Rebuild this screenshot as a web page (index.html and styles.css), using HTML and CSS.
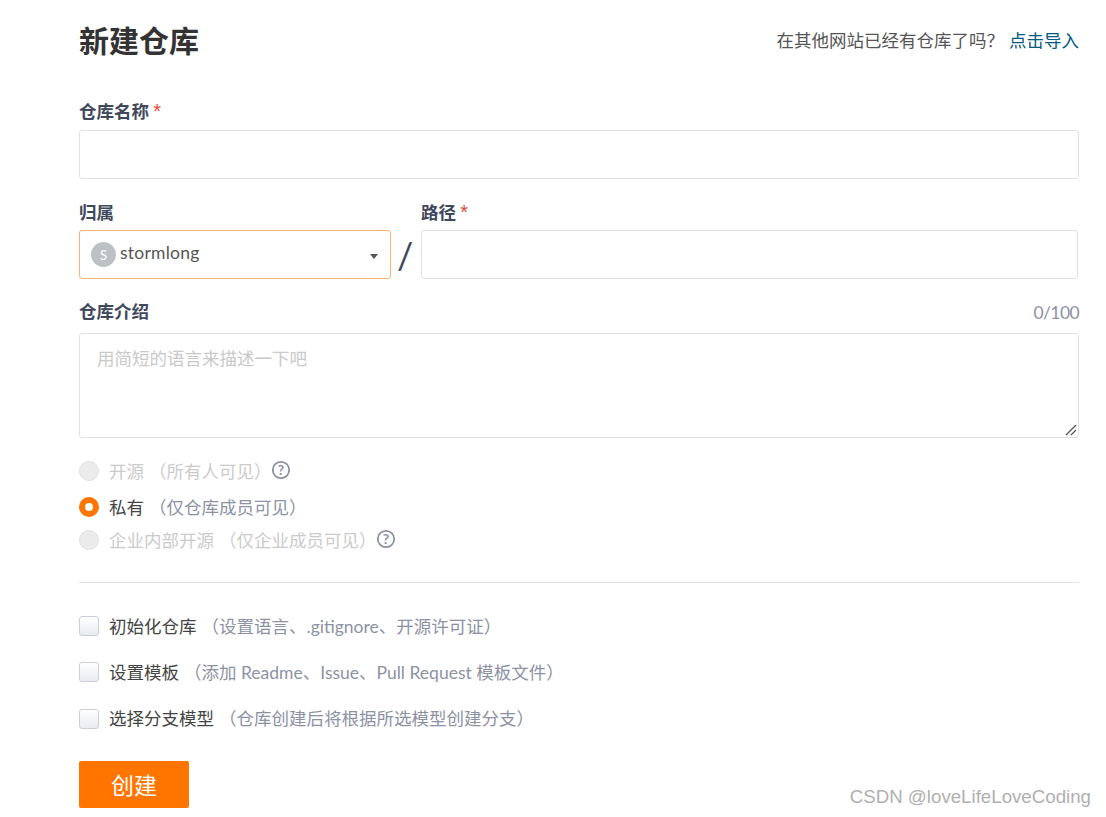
FILE: index.html
```html
<!DOCTYPE html>
<html lang="zh-CN">
<head>
<meta charset="utf-8">
<title>新建仓库</title>
<link rel="stylesheet" href="styles.css">
</head>
<body>
<main class="page">
  <header class="head">
    <h1 class="title">新建仓库</h1>
    <p class="import">在其他网站已经有仓库了吗？<a class="link">点击导入</a></p>
  </header>

  <div class="label name-label">仓库名称 <span class="req">*</span></div>
  <div class="input"></div>

  <div class="owner-row">
    <div class="owner">
      <div class="label">归属</div>
      <div class="select">
        <span class="avatar">S</span>
        <span class="user">stormlong</span>
        <span class="caret"></span>
      </div>
    </div>
    <div class="slash">/</div>
    <div class="path">
      <div class="label">路径 <span class="req">*</span></div>
      <div class="input"></div>
    </div>
  </div>

  <div class="desc-head">
    <div class="label">仓库介绍</div>
    <div class="count">0/100</div>
  </div>
  <div class="textarea">
    <span class="placeholder">用简短的语言来描述一下吧</span>
    <svg class="grip" width="12" height="12" viewBox="0 0 12 12"><path d="M1 11L11 1M6 11L11 6" stroke="#555" stroke-width="1.3" fill="none"/></svg>
  </div>

  <div class="radios">
    <div class="radio-row off r1">
      <span class="radio"></span><span class="r-text">开源</span><span class="r-note">（所有人可见）</span>
      <svg class="help" width="20" height="20" viewBox="0 0 20 20"><circle cx="10" cy="10" r="8.2" fill="none" stroke="#8c92a4" stroke-width="1.8"/><text x="10" y="14.8" text-anchor="middle" class="help-q">?</text></svg>
    </div>
    <div class="radio-row r2">
      <span class="radio on"></span><span class="r-text">私有</span><span class="r-note">（仅仓库成员可见）</span>
    </div>
    <div class="radio-row off r3">
      <span class="radio"></span><span class="r-text">企业内部开源</span><span class="r-note">（仅企业成员可见）</span>
      <svg class="help" width="20" height="20" viewBox="0 0 20 20"><circle cx="10" cy="10" r="8.2" fill="none" stroke="#8c92a4" stroke-width="1.8"/><text x="10" y="14.8" text-anchor="middle" class="help-q">?</text></svg>
    </div>
  </div>

  <hr class="rule">

  <div class="checks">
    <div class="check-row"><span class="check"></span><span class="c-text">初始化仓库</span><span class="c-note">（设置语言、.gitignore、开源许可证）</span></div>
    <div class="check-row"><span class="check"></span><span class="c-text">设置模板</span><span class="c-note">（添加 Readme、Issue、Pull Request 模板文件）</span></div>
    <div class="check-row"><span class="check"></span><span class="c-text">选择分支模型</span><span class="c-note">（仓库创建后将根据所选模型创建分支）</span></div>
  </div>

  <button class="submit">创建</button>
</main>
<div class="mark">CSDN @loveLifeLoveCoding</div>
</body>
</html>
```
FILE: styles.css
```css
* { box-sizing: border-box; }
html, body { margin: 0; height: 100%; overflow: hidden; background: #fff; }
body {
  font-family: Lato, "Noto Sans CJK SC", sans-serif;
  font-size: 17.5px;
  color: #40485b;
  position: relative;
}
.page { width: 1079px; padding: 17px 0 0 79px; }
.head { display: flex; justify-content: space-between; align-items: center; height: 46px; }
.title { margin: 0; font-size: 30px; font-weight: 700; color: #333; line-height: 46px; }
.import { margin: 0; color: #555; line-height: 24px; padding-top: 2px; }
.link { color: #005980; margin-left: 5px; }
.label { font-weight: 700; line-height: 24px; height: 24px; color: #40485b; }
.req { color: #e5493a; font-family: "Liberation Sans", sans-serif; font-size: 20px; font-weight: 400; line-height: 1; }
.name-label { margin-top: 37px; margin-bottom: 6px; }
.input { height: 49px; border: 1px solid #dfe1e6; border-radius: 3px; background: #fff; }
.owner-row { display: flex; margin-top: 22px; }
.owner { width: 312px; flex: none; }
.owner .label, .path .label { margin-bottom: 5px; }
.select {
  height: 49px; border: 1px solid #fdb36f; border-radius: 3px;
  display: flex; align-items: center; padding: 0 11px; position: relative;
}
.avatar {
  width: 25px; height: 25px; border-radius: 50%; background: #bdc1c6; color: #fff;
  font-size: 13px; display: flex; align-items: center; justify-content: center; flex: none;
}
.user { margin-left: 4px; color: #555; position: relative; top: -2px; letter-spacing: 0.25px; }
.caret {
  margin-left: auto; width: 0; height: 0; border-style: solid;
  border-width: 5px 4.5px 0; border-color: #555 transparent transparent;
  position: relative; top: 2px; right: 1px;
}
.slash {
  width: 30px; flex: none; height: 78px; padding-top: 30px; padding-left: 6px;
  font-size: 36px; line-height: 48px; color: #40485b; font-weight: 400;
}
.path { width: 657px; flex: none; }
.desc-head { display: flex; justify-content: space-between; align-items: center; margin-top: 21px; height: 24px; }
.count { color: #8c92a4; letter-spacing: -0.6px; }
.textarea {
  margin-top: 9px; height: 105px; border: 1px solid #dfe1e6; border-radius: 3px;
  padding: 11px 17px; position: relative; line-height: 28px;
}
.placeholder { color: #c9c9c9; }
.grip { position: absolute; right: 1px; bottom: 1px; }
.radios { margin-top: 19px; }
.radio-row { display: flex; align-items: center; height: 28px; }
.r2 { margin-top: 8px; }
.r3 { margin-top: 5px; }
.radio {
  width: 20px; height: 20px; border-radius: 50%; flex: none;
  background: #ebebeb; border: 1px solid #e0e0e0; margin-right: 10px;
}
.radio.on { background: #fff; border: 6.5px solid #ff7500; }
.r-text, .r-note { padding-bottom: 1px; }
.r-text { color: #444; }
.r-note { color: #8c92a4; margin-left: 5px; }
.off .r-text, .off .r-note { color: #cbcbcb; }
.off .r-note { margin-right: -1px; }
.help { flex: none; position: relative; top: -1px; }
.help-q { font-size: 14px; font-weight: 700; fill: #8c92a4; font-family: Lato, sans-serif; }
.rule { border: 0; border-top: 1px solid #e3e3e3; margin: 28px 0 0; }
.checks { margin-top: 29px; }
.check-row { display: flex; align-items: center; height: 28px; margin-bottom: 18.3px; }
.c-text, .c-note { padding-bottom: 2px; }
.check {
  width: 20px; height: 20px; flex: none; border: 1px solid #ccd0d6; border-radius: 3px;
  background: linear-gradient(#fff, #e9ebf0); margin-right: 10px;
}
.c-text { color: #444; }
.c-note { color: #8c92a4; margin-left: 5px; }
.submit {
  margin-top: 28px; display: block; width: 110px; height: 47px; border: 0; border-radius: 2px;
  background: #ff7500; color: #fff; font: inherit; font-size: 23px; padding: 0;
}
.mark {
  position: absolute; right: 15px; bottom: 9px; font-size: 18.7px; color: #b0b0b0;
  font-family: "Liberation Sans", sans-serif;
}
```
